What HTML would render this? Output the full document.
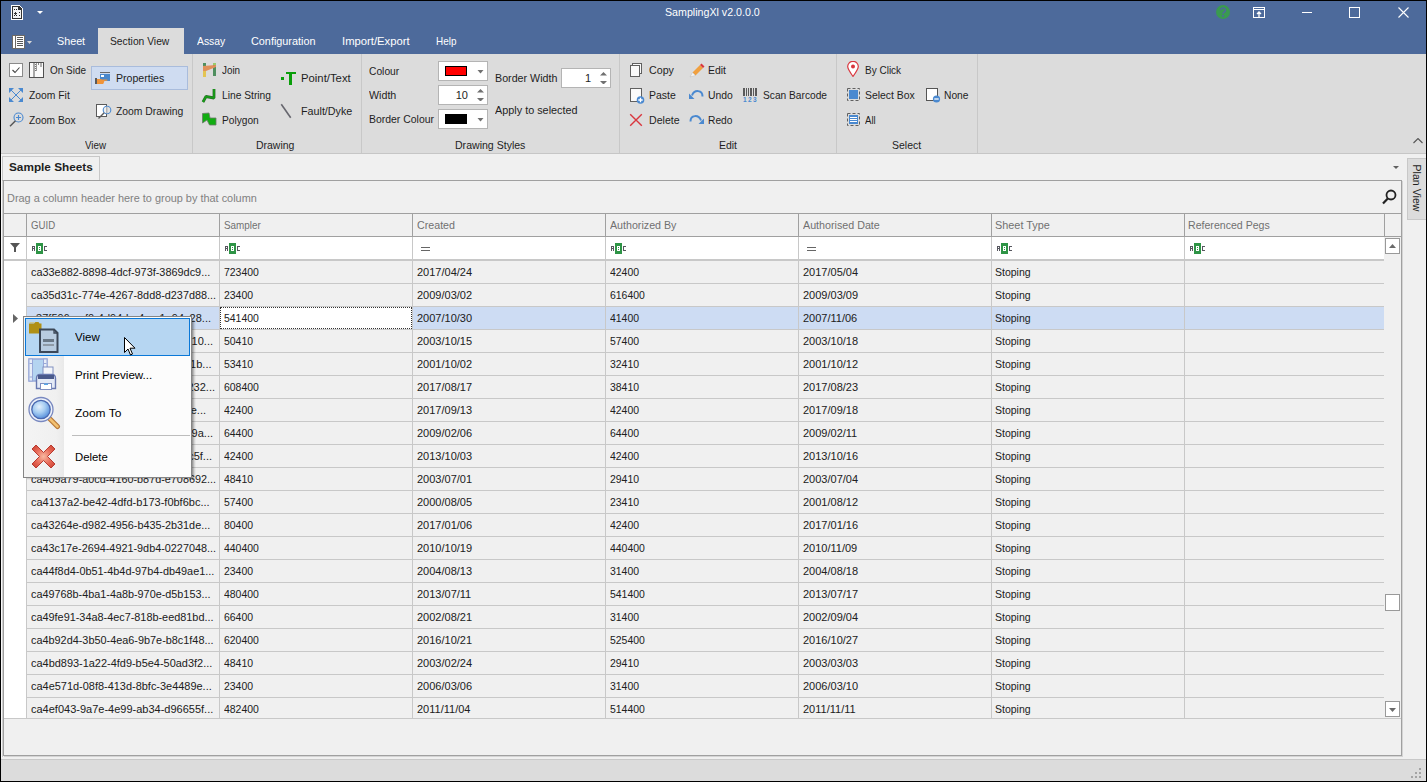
<!DOCTYPE html>
<html><head><meta charset="utf-8"><style>
html,body{margin:0;padding:0;width:1427px;height:782px;overflow:hidden;background:#f0f0f0}
.r{position:absolute;display:block}
.t{position:absolute;font-family:"Liberation Sans",sans-serif;font-size:11px;line-height:13px;color:#1e1e1e;white-space:nowrap}
.w{color:#fff}
.b{font-weight:bold;color:#1e1e1e}
.g{color:#808080}
.h{color:#707070}
.d{color:#202020}
.m{color:#000}
</style></head><body>
<div class="r" style="left:0px;top:0px;width:1427px;height:54px;background:#4d6a9b"></div><div class="t w" style="left:665px;top:6px;transform:scaleX(0.9689);transform-origin:0 0;">SamplingXl v2.0.0.0</div><svg class="r" style="left:11px;top:5px" width="13" height="15" viewBox="0 0 13 15" shape-rendering="crispEdges"><path d="M0 0h8l4 4v11H0z" fill="#fff"/><path d="M1 1h7l3 3v10H1z" fill="#333"/><path d="M2 2h5v3h3v8H2z" fill="#f4f4f4"/><path d="M8 2l2 2H8z" fill="#333"/><rect x="3" y="4" width="1" height="1" fill="#222"/><rect x="5" y="4" width="1" height="1" fill="#222"/><rect x="8" y="7" width="1" height="1" fill="#222"/><rect x="8" y="10" width="1" height="1" fill="#222"/><rect x="3" y="10" width="1" height="1" fill="#222"/><rect x="5" y="10" width="1" height="1" fill="#222"/><path d="M3 8h3v1H3zM4 7h1v3H4z" fill="#333"/></svg><svg class="r" style="left:37px;top:11px" width="6" height="3" viewBox="0 0 6 3"><path d="M0 0h6L3 3z" fill="#fff"/></svg><svg class="r" style="left:1216px;top:5px" width="14" height="14" viewBox="0 0 14 14"><circle cx="7" cy="7" r="7" fill="#3a9a50"/><path d="M4.7 5.2a2.3 2.2 0 1 1 3.3 2c-0.7 0.4-1 0.7-1 1.5" fill="none" stroke="#4d6a9b" stroke-width="1.6"/><rect x="6.1" y="9.9" width="1.8" height="1.8" fill="#4d6a9b"/></svg><svg class="r" style="left:1253px;top:7px" width="12" height="11" viewBox="0 0 12 11"><rect x="0.5" y="0.5" width="11" height="10" fill="none" stroke="#fff"/><path d="M0.5 2.5h11" stroke="#fff"/><path d="M6 10V5.5M4 7l2-2 2 2" fill="none" stroke="#fff" stroke-width="1.3"/></svg><div class="r" style="left:1302px;top:12px;width:10px;height:1px;background:#fff"></div><div class="r" style="left:1349px;top:7px;width:11px;height:11px;border:1px solid #fff;box-sizing:border-box"></div><svg class="r" style="left:1398px;top:7px" width="11" height="11" viewBox="0 0 11 11"><path d="M0.5 0.5l10 10M10.5 0.5l-10 10" stroke="#fff" stroke-width="1.1"/></svg><svg class="r" style="left:12px;top:35px" width="13" height="14" viewBox="0 0 13 14" shape-rendering="crispEdges"><rect x="0" y="0" width="13" height="14" fill="#6e6a66"/><rect x="1" y="1" width="2" height="12" fill="#fff"/><rect x="4" y="1" width="8" height="12" fill="#fff"/><path d="M5 2h6v1H5zM5 4h6v1H5zM5 6h6v1H5zM5 8h6v1H5zM5 10h6v1H5z" fill="#5a5a5a"/></svg><svg class="r" style="left:27px;top:41px" width="5" height="3" viewBox="0 0 5 3"><path d="M0 0h5L2.5 3z" fill="#d8d8d8"/></svg><div class="t w" style="left:57px;top:35px;transform:scaleX(0.9774);transform-origin:0 0;">Sheet</div><div class="r" style="left:98px;top:28px;width:86px;height:26px;background:#dcdcdc"></div><div class="t " style="left:110px;top:35px;transform:scaleX(0.9355);transform-origin:0 0;">Section View</div><div class="t w" style="left:197px;top:35px;transform:scaleX(0.9410);transform-origin:0 0;">Assay</div><div class="t w" style="left:251px;top:35px;transform:scaleX(0.9857);transform-origin:0 0;">Configuration</div><div class="t w" style="left:342px;top:35px;transform:scaleX(1.0253);transform-origin:0 0;">Import/Export</div><div class="t w" style="left:436px;top:35px;transform:scaleX(0.9017);transform-origin:0 0;">Help</div><div class="r" style="left:0px;top:54px;width:1427px;height:99px;background:#dcdcdc"></div><div class="r" style="left:0px;top:153px;width:1427px;height:1px;background:#c6c6c6"></div><div class="r" style="left:192px;top:54px;width:1px;height:99px;background:#c8c8c8"></div><div class="r" style="left:361px;top:54px;width:1px;height:99px;background:#c8c8c8"></div><div class="r" style="left:619px;top:54px;width:1px;height:99px;background:#c8c8c8"></div><div class="r" style="left:836px;top:54px;width:1px;height:99px;background:#c8c8c8"></div><div class="r" style="left:977px;top:54px;width:1px;height:99px;background:#c8c8c8"></div><div class="t " style="left:85px;top:139px;transform:scaleX(0.8919);transform-origin:0 0;">View</div><div class="t " style="left:256px;top:139px;transform:scaleX(0.9515);transform-origin:0 0;">Drawing</div><div class="t " style="left:455px;top:139px;transform:scaleX(0.9597);transform-origin:0 0;">Drawing Styles</div><div class="t " style="left:719px;top:139px;transform:scaleX(0.9489);transform-origin:0 0;">Edit</div><div class="t " style="left:892px;top:139px;transform:scaleX(0.9517);transform-origin:0 0;">Select</div><svg class="r" style="left:1413px;top:138px" width="10" height="6" viewBox="0 0 10 6"><path d="M0.5 5l4.5-4.5 4.5 4.5" fill="none" stroke="#555" stroke-width="1.1"/></svg><div class="r" style="left:9px;top:63px;width:14px;height:14px;background:#fff;border:1px solid #8a8a8a;box-sizing:border-box"></div><svg class="r" style="left:9px;top:63px" width="14" height="14" viewBox="0 0 14 14"><path d="M3.5 7l2.5 2.5 4.5-5" fill="none" stroke="#444" stroke-width="1.1"/></svg><svg class="r" style="left:29px;top:62px" width="16" height="16" viewBox="0 0 16 16" shape-rendering="crispEdges"><rect x="0.5" y="0.5" width="14" height="15" fill="#fafafa" stroke="#505050"/><rect x="4" y="1" width="2" height="14" fill="#a8a8a8"/><path d="M6 2h1v1H6zM6 4h1v1H6zM6 6h1v1H6zM6 8h1v1H6z" fill="#777"/><rect x="7" y="1" width="1" height="8" fill="#9a9a9a"/><rect x="11" y="1" width="2" height="4" fill="#b0b0b0"/><rect x="9" y="1" width="1" height="2" fill="#888"/></svg><div class="t " style="left:50px;top:64px;transform:scaleX(0.9057);transform-origin:0 0;">On Side</div><div class="r" style="left:91px;top:66px;width:97px;height:24px;background:#cfdcf1;border:1px solid #a9bcdc;box-sizing:border-box"></div><svg class="r" style="left:95px;top:72px" width="16" height="13" viewBox="0 0 16 13"><rect x="5" y="0" width="10" height="1" fill="#6a6a6a"/><rect x="5" y="2" width="10" height="7" fill="#4a88cc"/><rect x="6" y="3" width="3" height="2" fill="#fff"/><rect x="0" y="6" width="2" height="6" fill="#5a5a5a"/><path d="M2 7h3.5c0.8 0 1.2 0.5 2 0.5H12c0.6 0 0.6 1.2 0 1.2H9.5l-1 2.8c-0.3 0.5-0.7 0.5-1.2 0.5H2z" fill="#f0943a"/></svg><div class="t " style="left:116px;top:72px;transform:scaleX(0.9613);transform-origin:0 0;">Properties</div><svg class="r" style="left:9px;top:88px" width="14" height="14" viewBox="0 0 14 14"><path d="M0 0h5L0 5zM14 0v5L9 0zM0 14V9l5 5zM14 14H9l5-5z" fill="#4a89d0"/><path d="M1.5 1.5l11 11M12.5 1.5l-11 11" stroke="#4a89d0" stroke-width="1"/></svg><div class="t " style="left:29px;top:89px;transform:scaleX(0.9400);transform-origin:0 0;">Zoom Fit</div><svg class="r" style="left:9px;top:112px" width="15" height="16" viewBox="0 0 15 16"><circle cx="9.5" cy="5.5" r="4.5" fill="none" stroke="#4a89d0" stroke-width="1.1"/><path d="M9.5 3v5M7 5.5h5" stroke="#4a89d0" stroke-width="1.1"/><path d="M6.5 8.8L1 14.3" stroke="#555" stroke-width="1.4"/></svg><div class="t " style="left:29px;top:114px;transform:scaleX(0.9274);transform-origin:0 0;">Zoom Box</div><svg class="r" style="left:96px;top:104px" width="16" height="16" viewBox="0 0 16 16"><rect x="0.5" y="0.5" width="10" height="12" fill="#fff" stroke="#5a5a5a"/><circle cx="11" cy="6" r="3.8" fill="#e4e4e4" fill-opacity="0.6" stroke="#4a89d0" stroke-width="1.1"/><path d="M11 2.5v7" stroke="#b8b8b8"/><path d="M8.2 8.8L2.5 14.5" stroke="#5a5a5a" stroke-width="1.3"/></svg><div class="t " style="left:116px;top:105px;transform:scaleX(0.9422);transform-origin:0 0;">Zoom Drawing</div><svg class="r" style="left:202px;top:62px" width="15" height="16" viewBox="0 0 15 16"><rect x="1" y="1" width="3" height="14" fill="#4f8f5f"/><rect x="1" y="9" width="3" height="6" fill="#e3c452"/><rect x="11" y="1" width="3" height="13" fill="#4f8f5f"/><rect x="11" y="1" width="3" height="2" fill="#9acb6a"/><path d="M1 4L14 3V5L4 9H1z" fill="#e0905a"/></svg><div class="t " style="left:222px;top:64px;transform:scaleX(0.8966);transform-origin:0 0;">Join</div><svg class="r" style="left:201px;top:87px" width="16" height="17" viewBox="0 0 16 17"><path d="M2 15L5 9.5 13 11V2" fill="none" stroke="#2a6a2a" stroke-width="2.8" stroke-linejoin="bevel"/><path d="M2 15L5 9.5 13 11V2" fill="none" stroke="#15a015" stroke-width="1.6" stroke-linejoin="bevel"/></svg><div class="t " style="left:222px;top:89px;transform:scaleX(0.9317);transform-origin:0 0;">Line String</div><svg class="r" style="left:201px;top:112px" width="16" height="14" viewBox="0 0 16 14"><path d="M1.5 1.5L8 1 9 6H15V13H8.5L6 8 1.5 11z" fill="#11ad11" stroke="#6a7a6a" stroke-width="0.8"/></svg><div class="t " style="left:222px;top:114px;transform:scaleX(0.9254);transform-origin:0 0;">Polygon</div><svg class="r" style="left:281px;top:72px" width="15" height="14" viewBox="0 0 15 14" shape-rendering="crispEdges"><rect x="0" y="5" width="3" height="3" fill="#0a9e0a"/><rect x="5" y="0" width="10" height="2" fill="#0a9e0a"/><rect x="8" y="2" width="3" height="11" fill="#0a9e0a"/></svg><div class="t " style="left:301px;top:72px;transform:scaleX(1.0287);transform-origin:0 0;">Point/Text</div><svg class="r" style="left:280px;top:103px" width="13" height="17" viewBox="0 0 13 17"><path d="M1.3 1.3l9.4 13.4" stroke="#66666e" stroke-width="1.6"/></svg><div class="t " style="left:301px;top:105px;transform:scaleX(0.9757);transform-origin:0 0;">Fault/Dyke</div><div class="t " style="left:369px;top:65px;transform:scaleX(0.9319);transform-origin:0 0;">Colour</div><div class="t " style="left:369px;top:89px;transform:scaleX(0.9707);transform-origin:0 0;">Width</div><div class="t " style="left:369px;top:113px;transform:scaleX(0.9491);transform-origin:0 0;">Border Colour</div><div class="r" style="left:438px;top:61px;width:50px;height:20px;background:#fff;border:1px solid #b4b4b4;box-sizing:border-box"></div><div class="r" style="left:445px;top:66px;width:22px;height:10px;background:#f00;border:1px solid #000;box-sizing:border-box"></div><svg class="r" style="left:477px;top:70px" width="7" height="4" viewBox="0 0 7 4"><path d="M0.5 0h6l-3 3.5z" fill="#707070"/></svg><div class="r" style="left:438px;top:85px;width:50px;height:20px;background:#fff;border:1px solid #b4b4b4;box-sizing:border-box"></div><div class="t" style="left:438px;top:89px;width:30px;text-align:right">10</div><svg class="r" style="left:477px;top:89px" width="7" height="12" viewBox="0 0 7 12"><path d="M0 3.5h7L3.5 0zM0 9h7L3.5 12.5z" fill="#707070"/></svg><div class="r" style="left:438px;top:109px;width:50px;height:20px;background:#fff;border:1px solid #b4b4b4;box-sizing:border-box"></div><div class="r" style="left:445px;top:114px;width:22px;height:10px;background:#000;border:1px solid #000;box-sizing:border-box"></div><svg class="r" style="left:477px;top:118px" width="7" height="4" viewBox="0 0 7 4"><path d="M0.5 0h6l-3 3.5z" fill="#707070"/></svg><div class="t " style="left:495px;top:72px;transform:scaleX(0.9719);transform-origin:0 0;">Border Width</div><div class="r" style="left:561px;top:68px;width:50px;height:20px;background:#fff;border:1px solid #b4b4b4;box-sizing:border-box"></div><div class="t" style="left:561px;top:72px;width:30px;text-align:right">1</div><svg class="r" style="left:600px;top:72px" width="7" height="12" viewBox="0 0 7 12"><path d="M0 3.5h7L3.5 0zM0 9h7L3.5 12.5z" fill="#707070"/></svg><div class="t " style="left:495px;top:104px;transform:scaleX(0.9859);transform-origin:0 0;">Apply to selected</div><svg class="r" style="left:629px;top:62px" width="15" height="16" viewBox="0 0 15 16" shape-rendering="crispEdges"><rect x="3.5" y="1.5" width="9" height="10" fill="#fafafa" stroke="#606060"/><rect x="1.5" y="3.5" width="9" height="11" fill="#fafafa" stroke="#606060"/></svg><div class="t " style="left:649px;top:64px;transform:scaleX(0.9693);transform-origin:0 0;">Copy</div><svg class="r" style="left:629px;top:87px" width="16" height="17" viewBox="0 0 16 17"><rect x="1.5" y="1.5" width="11" height="13" fill="#fafafa" stroke="#606060"/><circle cx="11.5" cy="13" r="3.8" fill="#4a89d0"/><path d="M11.5 10.8v4.4M9.3 13h4.4" stroke="#fff" stroke-width="1.3"/></svg><div class="t " style="left:649px;top:89px;transform:scaleX(0.9524);transform-origin:0 0;">Paste</div><svg class="r" style="left:629px;top:113px" width="14" height="14" viewBox="0 0 14 14"><path d="M1.2 1.2l11.6 11.6M12.8 1.2L1.2 12.8" stroke="#d9363e" stroke-width="1.4"/></svg><div class="t " style="left:649px;top:114px;transform:scaleX(0.9624);transform-origin:0 0;">Delete</div><svg class="r" style="left:689px;top:62px" width="16" height="16" viewBox="0 0 16 16"><path d="M3.5 10.5L11 3l3 3-7.5 7.5z" fill="#f0a040"/><path d="M11 3l1.5-1.5 3 3L14 6z" fill="#d9363e"/><path d="M3.5 10.5l3 3L1 15z" fill="#f4f4f4" stroke="#bbb" stroke-width="0.5"/></svg><div class="t " style="left:708px;top:64px;transform:scaleX(0.9489);transform-origin:0 0;">Edit</div><svg class="r" style="left:689px;top:89px" width="15" height="11" viewBox="0 0 15 11"><path d="M13.5 7.5C13.5 1 5.5 0 3 6.5" fill="none" stroke="#4a89d0" stroke-width="2"/><path d="M0 4.5V10h5.5z" fill="#4a89d0"/></svg><div class="t " style="left:708px;top:89px;transform:scaleX(0.9431);transform-origin:0 0;">Undo</div><svg class="r" style="left:689px;top:114px" width="15" height="11" viewBox="0 0 15 11"><path d="M1.5 7.5C1.5 1 9.5 0 12 6.5" fill="none" stroke="#4a89d0" stroke-width="2"/><path d="M15 4.5V10H9.5z" fill="#4a89d0"/></svg><div class="t " style="left:708px;top:114px;transform:scaleX(0.9317);transform-origin:0 0;">Redo</div><svg class="r" style="left:743px;top:88px" width="15" height="15" viewBox="0 0 15 15" shape-rendering="crispEdges"><path d="M0 0h2v8H0zM3 0h1v8H3zM5 0h1v8H5zM7 0h2v8H7zM10 0h1v8h-1zM12 0h2v8h-2z" fill="#5a5a5a"/><text x="0" y="14" font-size="6.5" font-weight="bold" font-family="Liberation Sans" fill="#4a89d0" shape-rendering="auto">1</text><text x="5" y="14" font-size="6.5" font-weight="bold" font-family="Liberation Sans" fill="#4a89d0">2</text><text x="10" y="14" font-size="6.5" font-weight="bold" font-family="Liberation Sans" fill="#4a89d0">3</text></svg><div class="t " style="left:763px;top:89px;transform:scaleX(0.9261);transform-origin:0 0;">Scan Barcode</div><svg class="r" style="left:847px;top:61px" width="12" height="16" viewBox="0 0 12 16"><path d="M6 15.5C2 10 0.7 7.5 0.7 5.6a5.3 5.3 0 0 1 10.6 0C11.3 7.5 10 10 6 15.5z" fill="#fff" stroke="#d9363e" stroke-width="1.2"/><circle cx="6" cy="5.6" r="2" fill="#d9363e"/></svg><div class="t " style="left:865px;top:64px;transform:scaleX(0.9085);transform-origin:0 0;">By Click</div><svg class="r" style="left:847px;top:88px" width="14" height="14" viewBox="0 0 14 14"><rect x="0.5" y="0.5" width="12" height="12" fill="none" stroke="#606060" stroke-dasharray="3 2" stroke-dashoffset="0"/><rect x="2" y="2" width="9" height="9" fill="#4a89d0"/></svg><div class="t " style="left:865px;top:89px;transform:scaleX(0.9469);transform-origin:0 0;">Select Box</div><svg class="r" style="left:926px;top:88px" width="15" height="15" viewBox="0 0 15 15"><rect x="0.5" y="0.5" width="11" height="12" fill="#fff" stroke="#555"/><circle cx="10.5" cy="11" r="3.6" fill="#4a89d0"/><path d="M8.3 11h4.4" stroke="#fff" stroke-width="1.3"/></svg><div class="t " style="left:944px;top:89px;transform:scaleX(0.9317);transform-origin:0 0;">None</div><svg class="r" style="left:847px;top:113px" width="14" height="14" viewBox="0 0 14 14"><rect x="0.5" y="0.5" width="12" height="12" fill="none" stroke="#606060" stroke-dasharray="3 2"/><rect x="2" y="2" width="9" height="9" fill="#4a89d0"/><path d="M3 4.5h7M3 6.5h7M3 8.5h7" stroke="#fff"/></svg><div class="t " style="left:865px;top:114px;transform:scaleX(0.8746);transform-origin:0 0;">All</div><div class="r" style="left:0px;top:154px;width:1427px;height:604px;background:#f0f0f0"></div><div class="r" style="left:2px;top:156px;width:98px;height:25px;background:#f0f0f0;border:1px solid #c8c8c8;border-bottom:none;box-sizing:border-box"></div><div class="t b" style="left:9px;top:161px;transform:scaleX(1.0707);transform-origin:0 0;">Sample Sheets</div><div class="r" style="left:2px;top:180px;width:1400px;height:1px;background:#b4b4b4"></div><svg class="r" style="left:1393px;top:166px" width="6" height="3" viewBox="0 0 6 3"><path d="M0 0h6L3 3z" fill="#606060"/></svg><div class="r" style="left:1407px;top:158px;width:19px;height:62px;background:#dcdcdc;border:1px solid #c8c8c8;border-right:none;box-sizing:border-box"></div><div class="t" style="left:1389px;top:182px;width:56px;text-align:center;transform:translate(-1px,-0.5px) rotate(90deg) scaleX(0.965)">Plan View</div><div class="r" style="left:3px;top:180px;width:1399px;height:576px;border:1px solid #a0a0a0;box-sizing:border-box;background:#f0f0f0"></div><div class="t g" style="left:7px;top:192px;transform:scaleX(0.9915);transform-origin:0 0;">Drag a column header here to group by that column</div><svg class="r" style="left:1382px;top:189px" width="15" height="16" viewBox="0 0 15 16"><circle cx="9" cy="6" r="4.5" fill="none" stroke="#222" stroke-width="1.8"/><path d="M5.8 9.5L1 14.5" stroke="#222" stroke-width="2.2"/></svg><div class="r" style="left:4px;top:213px;width:1397px;height:1px;background:#a0a0a0"></div><div class="r" style="left:4px;top:236px;width:1397px;height:1px;background:#a0a0a0"></div><div class="r" style="left:26px;top:214px;width:1px;height:22px;background:#a0a0a0"></div><div class="r" style="left:219px;top:214px;width:1px;height:22px;background:#a0a0a0"></div><div class="r" style="left:412px;top:214px;width:1px;height:22px;background:#a0a0a0"></div><div class="r" style="left:605px;top:214px;width:1px;height:22px;background:#a0a0a0"></div><div class="r" style="left:798px;top:214px;width:1px;height:22px;background:#a0a0a0"></div><div class="r" style="left:991px;top:214px;width:1px;height:22px;background:#a0a0a0"></div><div class="r" style="left:1184px;top:214px;width:1px;height:22px;background:#a0a0a0"></div><div class="r" style="left:1384px;top:214px;width:1px;height:22px;background:#a0a0a0"></div><div class="t h" style="left:31px;top:219px;transform:scaleX(0.8764);transform-origin:0 0;">GUID</div><div class="t h" style="left:224px;top:219px;transform:scaleX(0.8982);transform-origin:0 0;">Sampler</div><div class="t h" style="left:417px;top:219px;transform:scaleX(0.9709);transform-origin:0 0;">Created</div><div class="t h" style="left:610px;top:219px;transform:scaleX(0.9696);transform-origin:0 0;">Authorized By</div><div class="t h" style="left:803px;top:219px;transform:scaleX(0.9735);transform-origin:0 0;">Authorised Date</div><div class="t h" style="left:995px;top:219px;transform:scaleX(0.9882);transform-origin:0 0;">Sheet Type</div><div class="t h" style="left:1188px;top:219px;transform:scaleX(0.9624);transform-origin:0 0;">Referenced Pegs</div><div class="r" style="left:4px;top:237px;width:1380px;height:22px;background:#fff"></div><div class="r" style="left:4px;top:259px;width:1380px;height:2px;background:#c8c8c8"></div><div class="r" style="left:26px;top:237px;width:1px;height:22px;background:#c8c8c8"></div><div class="r" style="left:219px;top:237px;width:1px;height:22px;background:#c8c8c8"></div><div class="r" style="left:412px;top:237px;width:1px;height:22px;background:#c8c8c8"></div><div class="r" style="left:605px;top:237px;width:1px;height:22px;background:#c8c8c8"></div><div class="r" style="left:798px;top:237px;width:1px;height:22px;background:#c8c8c8"></div><div class="r" style="left:991px;top:237px;width:1px;height:22px;background:#c8c8c8"></div><div class="r" style="left:1184px;top:237px;width:1px;height:22px;background:#c8c8c8"></div><svg class="r" style="left:10px;top:243px" width="10" height="9" viewBox="0 0 10 9"><path d="M0 0h10L6 4.5V9H4V4.5z" fill="#555"/></svg><svg class="r" style="left:32px;top:243px" width="16" height="11" viewBox="0 0 16 11" shape-rendering="crispEdges"><path d="M0 3h3v1H0zM0 4h1v4H0zM2 4h1v4H2zM0 5h3v1H0z" fill="#56565e"/><rect x="4" y="0" width="7" height="11" fill="#2e9446"/><rect x="6" y="3" width="3" height="5" fill="#fff"/><rect x="7" y="4" width="1" height="1" fill="#2e9446"/><rect x="7" y="6" width="1" height="1" fill="#2e9446"/><path d="M12 3h3v1h-3zM12 4h1v3h-1zM12 7h3v1h-3z" fill="#56565e"/></svg><svg class="r" style="left:225px;top:243px" width="16" height="11" viewBox="0 0 16 11" shape-rendering="crispEdges"><path d="M0 3h3v1H0zM0 4h1v4H0zM2 4h1v4H2zM0 5h3v1H0z" fill="#56565e"/><rect x="4" y="0" width="7" height="11" fill="#2e9446"/><rect x="6" y="3" width="3" height="5" fill="#fff"/><rect x="7" y="4" width="1" height="1" fill="#2e9446"/><rect x="7" y="6" width="1" height="1" fill="#2e9446"/><path d="M12 3h3v1h-3zM12 4h1v3h-1zM12 7h3v1h-3z" fill="#56565e"/></svg><div class="r" style="left:421px;top:247px;width:9px;height:1px;background:#666"></div><div class="r" style="left:421px;top:250px;width:9px;height:1px;background:#666"></div><svg class="r" style="left:611px;top:243px" width="16" height="11" viewBox="0 0 16 11" shape-rendering="crispEdges"><path d="M0 3h3v1H0zM0 4h1v4H0zM2 4h1v4H2zM0 5h3v1H0z" fill="#56565e"/><rect x="4" y="0" width="7" height="11" fill="#2e9446"/><rect x="6" y="3" width="3" height="5" fill="#fff"/><rect x="7" y="4" width="1" height="1" fill="#2e9446"/><rect x="7" y="6" width="1" height="1" fill="#2e9446"/><path d="M12 3h3v1h-3zM12 4h1v3h-1zM12 7h3v1h-3z" fill="#56565e"/></svg><div class="r" style="left:807px;top:247px;width:9px;height:1px;background:#666"></div><div class="r" style="left:807px;top:250px;width:9px;height:1px;background:#666"></div><svg class="r" style="left:997px;top:243px" width="16" height="11" viewBox="0 0 16 11" shape-rendering="crispEdges"><path d="M0 3h3v1H0zM0 4h1v4H0zM2 4h1v4H2zM0 5h3v1H0z" fill="#56565e"/><rect x="4" y="0" width="7" height="11" fill="#2e9446"/><rect x="6" y="3" width="3" height="5" fill="#fff"/><rect x="7" y="4" width="1" height="1" fill="#2e9446"/><rect x="7" y="6" width="1" height="1" fill="#2e9446"/><path d="M12 3h3v1h-3zM12 4h1v3h-1zM12 7h3v1h-3z" fill="#56565e"/></svg><svg class="r" style="left:1190px;top:243px" width="16" height="11" viewBox="0 0 16 11" shape-rendering="crispEdges"><path d="M0 3h3v1H0zM0 4h1v4H0zM2 4h1v4H2zM0 5h3v1H0z" fill="#56565e"/><rect x="4" y="0" width="7" height="11" fill="#2e9446"/><rect x="6" y="3" width="3" height="5" fill="#fff"/><rect x="7" y="4" width="1" height="1" fill="#2e9446"/><rect x="7" y="6" width="1" height="1" fill="#2e9446"/><path d="M12 3h3v1h-3zM12 4h1v3h-1zM12 7h3v1h-3z" fill="#56565e"/></svg><div class="r" style="left:4px;top:261px;width:22px;height:457px;background:#fff"></div><div class="r" style="left:26px;top:261px;width:1px;height:457px;background:#c8c8c8"></div><div class="r" style="left:4px;top:718px;width:1397px;height:1px;background:#c8c8c8"></div><div class="r" style="left:27px;top:261px;width:1357px;height:22px;background:#f0f0f0"></div><div class="r" style="left:27px;top:283px;width:1357px;height:1px;background:#c8c8c8"></div><div class="t d" style="left:31px;top:266px;transform:scaleX(0.9901);transform-origin:0 0;">ca33e882-8898-4dcf-973f-3869dc9...</div><div class="t d" style="left:224px;top:266px;transform:scaleX(0.9500);transform-origin:0 0;">723400</div><div class="t d" style="left:417px;top:266px;">2017/04/24</div><div class="t d" style="left:610px;top:266px;transform:scaleX(0.9500);transform-origin:0 0;">42400</div><div class="t d" style="left:803px;top:266px;">2017/05/04</div><div class="t d" style="left:995px;top:266px;transform:scaleX(0.9541);transform-origin:0 0;">Stoping</div><div class="r" style="left:219px;top:261px;width:1px;height:22px;background:#c8c8c8"></div><div class="r" style="left:412px;top:261px;width:1px;height:22px;background:#c8c8c8"></div><div class="r" style="left:605px;top:261px;width:1px;height:22px;background:#c8c8c8"></div><div class="r" style="left:798px;top:261px;width:1px;height:22px;background:#c8c8c8"></div><div class="r" style="left:991px;top:261px;width:1px;height:22px;background:#c8c8c8"></div><div class="r" style="left:1184px;top:261px;width:1px;height:22px;background:#c8c8c8"></div><div class="r" style="left:27px;top:284px;width:1357px;height:22px;background:#f0f0f0"></div><div class="r" style="left:27px;top:306px;width:1357px;height:1px;background:#c8c8c8"></div><div class="t d" style="left:31px;top:289px;transform:scaleX(0.9856);transform-origin:0 0;">ca35d31c-774e-4267-8dd8-d237d88...</div><div class="t d" style="left:224px;top:289px;transform:scaleX(0.9500);transform-origin:0 0;">23400</div><div class="t d" style="left:417px;top:289px;">2009/03/02</div><div class="t d" style="left:610px;top:289px;transform:scaleX(0.9500);transform-origin:0 0;">616400</div><div class="t d" style="left:803px;top:289px;">2009/03/09</div><div class="t d" style="left:995px;top:289px;transform:scaleX(0.9541);transform-origin:0 0;">Stoping</div><div class="r" style="left:219px;top:284px;width:1px;height:22px;background:#c8c8c8"></div><div class="r" style="left:412px;top:284px;width:1px;height:22px;background:#c8c8c8"></div><div class="r" style="left:605px;top:284px;width:1px;height:22px;background:#c8c8c8"></div><div class="r" style="left:798px;top:284px;width:1px;height:22px;background:#c8c8c8"></div><div class="r" style="left:991px;top:284px;width:1px;height:22px;background:#c8c8c8"></div><div class="r" style="left:1184px;top:284px;width:1px;height:22px;background:#c8c8c8"></div><div class="r" style="left:27px;top:307px;width:1357px;height:22px;background:#cddcf3"></div><div class="r" style="left:27px;top:329px;width:1357px;height:1px;background:#c8c8c8"></div><div class="t d" style="left:27px;top:312px;width:184px;height:13px;overflow:hidden"><span style="position:absolute;right:0;top:0">ca37f596-ecf0-4d94-ba4e-c1e94c28...</span></div><div class="t d" style="left:224px;top:312px;transform:scaleX(0.9500);transform-origin:0 0;">541400</div><div class="t d" style="left:417px;top:312px;">2007/10/30</div><div class="t d" style="left:610px;top:312px;transform:scaleX(0.9500);transform-origin:0 0;">41400</div><div class="t d" style="left:803px;top:312px;">2007/11/06</div><div class="t d" style="left:995px;top:312px;transform:scaleX(0.9541);transform-origin:0 0;">Stoping</div><div class="r" style="left:219px;top:307px;width:1px;height:22px;background:#c8c8c8"></div><div class="r" style="left:412px;top:307px;width:1px;height:22px;background:#c8c8c8"></div><div class="r" style="left:605px;top:307px;width:1px;height:22px;background:#c8c8c8"></div><div class="r" style="left:798px;top:307px;width:1px;height:22px;background:#c8c8c8"></div><div class="r" style="left:991px;top:307px;width:1px;height:22px;background:#c8c8c8"></div><div class="r" style="left:1184px;top:307px;width:1px;height:22px;background:#c8c8c8"></div><div class="r" style="left:27px;top:330px;width:1357px;height:22px;background:#f0f0f0"></div><div class="r" style="left:27px;top:352px;width:1357px;height:1px;background:#c8c8c8"></div><div class="t d" style="left:27px;top:335px;width:186px;height:13px;overflow:hidden"><span style="position:absolute;right:0;top:0">ca3a1c2e-7d5b-4f3a-9e21-8b2c4ce10...</span></div><div class="t d" style="left:224px;top:335px;transform:scaleX(0.9500);transform-origin:0 0;">50410</div><div class="t d" style="left:417px;top:335px;">2003/10/15</div><div class="t d" style="left:610px;top:335px;transform:scaleX(0.9500);transform-origin:0 0;">57400</div><div class="t d" style="left:803px;top:335px;">2003/10/18</div><div class="t d" style="left:995px;top:335px;transform:scaleX(0.9541);transform-origin:0 0;">Stoping</div><div class="r" style="left:219px;top:330px;width:1px;height:22px;background:#c8c8c8"></div><div class="r" style="left:412px;top:330px;width:1px;height:22px;background:#c8c8c8"></div><div class="r" style="left:605px;top:330px;width:1px;height:22px;background:#c8c8c8"></div><div class="r" style="left:798px;top:330px;width:1px;height:22px;background:#c8c8c8"></div><div class="r" style="left:991px;top:330px;width:1px;height:22px;background:#c8c8c8"></div><div class="r" style="left:1184px;top:330px;width:1px;height:22px;background:#c8c8c8"></div><div class="r" style="left:27px;top:353px;width:1357px;height:22px;background:#f0f0f0"></div><div class="r" style="left:27px;top:375px;width:1357px;height:1px;background:#c8c8c8"></div><div class="t d" style="left:27px;top:358px;width:184.5px;height:13px;overflow:hidden"><span style="position:absolute;right:0;top:0">ca3c55d1-2b7e-4a09-8c3f-e7a9ec1b...</span></div><div class="t d" style="left:224px;top:358px;transform:scaleX(0.9500);transform-origin:0 0;">53410</div><div class="t d" style="left:417px;top:358px;">2001/10/02</div><div class="t d" style="left:610px;top:358px;transform:scaleX(0.9500);transform-origin:0 0;">32410</div><div class="t d" style="left:803px;top:358px;">2001/10/12</div><div class="t d" style="left:995px;top:358px;transform:scaleX(0.9541);transform-origin:0 0;">Stoping</div><div class="r" style="left:219px;top:353px;width:1px;height:22px;background:#c8c8c8"></div><div class="r" style="left:412px;top:353px;width:1px;height:22px;background:#c8c8c8"></div><div class="r" style="left:605px;top:353px;width:1px;height:22px;background:#c8c8c8"></div><div class="r" style="left:798px;top:353px;width:1px;height:22px;background:#c8c8c8"></div><div class="r" style="left:991px;top:353px;width:1px;height:22px;background:#c8c8c8"></div><div class="r" style="left:1184px;top:353px;width:1px;height:22px;background:#c8c8c8"></div><div class="r" style="left:27px;top:376px;width:1357px;height:22px;background:#f0f0f0"></div><div class="r" style="left:27px;top:398px;width:1357px;height:1px;background:#c8c8c8"></div><div class="t d" style="left:27px;top:381px;width:188px;height:13px;overflow:hidden"><span style="position:absolute;right:0;top:0">ca3d0f4b-91ce-4b62-a7d8-5f1e0232...</span></div><div class="t d" style="left:224px;top:381px;transform:scaleX(0.9500);transform-origin:0 0;">608400</div><div class="t d" style="left:417px;top:381px;">2017/08/17</div><div class="t d" style="left:610px;top:381px;transform:scaleX(0.9500);transform-origin:0 0;">38410</div><div class="t d" style="left:803px;top:381px;">2017/08/23</div><div class="t d" style="left:995px;top:381px;transform:scaleX(0.9541);transform-origin:0 0;">Stoping</div><div class="r" style="left:219px;top:376px;width:1px;height:22px;background:#c8c8c8"></div><div class="r" style="left:412px;top:376px;width:1px;height:22px;background:#c8c8c8"></div><div class="r" style="left:605px;top:376px;width:1px;height:22px;background:#c8c8c8"></div><div class="r" style="left:798px;top:376px;width:1px;height:22px;background:#c8c8c8"></div><div class="r" style="left:991px;top:376px;width:1px;height:22px;background:#c8c8c8"></div><div class="r" style="left:1184px;top:376px;width:1px;height:22px;background:#c8c8c8"></div><div class="r" style="left:27px;top:399px;width:1357px;height:22px;background:#f0f0f0"></div><div class="r" style="left:27px;top:421px;width:1357px;height:1px;background:#c8c8c8"></div><div class="t d" style="left:27px;top:404px;width:179px;height:13px;overflow:hidden"><span style="position:absolute;right:0;top:0">ca3e7a90-4c1d-4e8b-b2f6-a93c7ce...</span></div><div class="t d" style="left:224px;top:404px;transform:scaleX(0.9500);transform-origin:0 0;">42400</div><div class="t d" style="left:417px;top:404px;">2017/09/13</div><div class="t d" style="left:610px;top:404px;transform:scaleX(0.9500);transform-origin:0 0;">42400</div><div class="t d" style="left:803px;top:404px;">2017/09/18</div><div class="t d" style="left:995px;top:404px;transform:scaleX(0.9541);transform-origin:0 0;">Stoping</div><div class="r" style="left:219px;top:399px;width:1px;height:22px;background:#c8c8c8"></div><div class="r" style="left:412px;top:399px;width:1px;height:22px;background:#c8c8c8"></div><div class="r" style="left:605px;top:399px;width:1px;height:22px;background:#c8c8c8"></div><div class="r" style="left:798px;top:399px;width:1px;height:22px;background:#c8c8c8"></div><div class="r" style="left:991px;top:399px;width:1px;height:22px;background:#c8c8c8"></div><div class="r" style="left:1184px;top:399px;width:1px;height:22px;background:#c8c8c8"></div><div class="r" style="left:27px;top:422px;width:1357px;height:22px;background:#f0f0f0"></div><div class="r" style="left:27px;top:444px;width:1357px;height:1px;background:#c8c8c8"></div><div class="t d" style="left:27px;top:427px;width:186px;height:13px;overflow:hidden"><span style="position:absolute;right:0;top:0">ca3f2b61-d0a4-4c7e-95b3-6e8dc9a...</span></div><div class="t d" style="left:224px;top:427px;transform:scaleX(0.9500);transform-origin:0 0;">64400</div><div class="t d" style="left:417px;top:427px;">2009/02/06</div><div class="t d" style="left:610px;top:427px;transform:scaleX(0.9500);transform-origin:0 0;">64400</div><div class="t d" style="left:803px;top:427px;">2009/02/11</div><div class="t d" style="left:995px;top:427px;transform:scaleX(0.9541);transform-origin:0 0;">Stoping</div><div class="r" style="left:219px;top:422px;width:1px;height:22px;background:#c8c8c8"></div><div class="r" style="left:412px;top:422px;width:1px;height:22px;background:#c8c8c8"></div><div class="r" style="left:605px;top:422px;width:1px;height:22px;background:#c8c8c8"></div><div class="r" style="left:798px;top:422px;width:1px;height:22px;background:#c8c8c8"></div><div class="r" style="left:991px;top:422px;width:1px;height:22px;background:#c8c8c8"></div><div class="r" style="left:1184px;top:422px;width:1px;height:22px;background:#c8c8c8"></div><div class="r" style="left:27px;top:445px;width:1357px;height:22px;background:#f0f0f0"></div><div class="r" style="left:27px;top:467px;width:1357px;height:1px;background:#c8c8c8"></div><div class="t d" style="left:27px;top:450px;width:185px;height:13px;overflow:hidden"><span style="position:absolute;right:0;top:0">ca401d8e-5a3c-4f1b-8e07-c2b6c5f...</span></div><div class="t d" style="left:224px;top:450px;transform:scaleX(0.9500);transform-origin:0 0;">42400</div><div class="t d" style="left:417px;top:450px;">2013/10/03</div><div class="t d" style="left:610px;top:450px;transform:scaleX(0.9500);transform-origin:0 0;">42400</div><div class="t d" style="left:803px;top:450px;">2013/10/16</div><div class="t d" style="left:995px;top:450px;transform:scaleX(0.9541);transform-origin:0 0;">Stoping</div><div class="r" style="left:219px;top:445px;width:1px;height:22px;background:#c8c8c8"></div><div class="r" style="left:412px;top:445px;width:1px;height:22px;background:#c8c8c8"></div><div class="r" style="left:605px;top:445px;width:1px;height:22px;background:#c8c8c8"></div><div class="r" style="left:798px;top:445px;width:1px;height:22px;background:#c8c8c8"></div><div class="r" style="left:991px;top:445px;width:1px;height:22px;background:#c8c8c8"></div><div class="r" style="left:1184px;top:445px;width:1px;height:22px;background:#c8c8c8"></div><div class="r" style="left:27px;top:468px;width:1357px;height:22px;background:#f0f0f0"></div><div class="r" style="left:27px;top:490px;width:1357px;height:1px;background:#c8c8c8"></div><div class="t d" style="left:31px;top:473px;transform:scaleX(0.9856);transform-origin:0 0;">ca409a79-a0cd-4160-b87d-e708692...</div><div class="t d" style="left:224px;top:473px;transform:scaleX(0.9500);transform-origin:0 0;">48410</div><div class="t d" style="left:417px;top:473px;">2003/07/01</div><div class="t d" style="left:610px;top:473px;transform:scaleX(0.9500);transform-origin:0 0;">29410</div><div class="t d" style="left:803px;top:473px;">2003/07/04</div><div class="t d" style="left:995px;top:473px;transform:scaleX(0.9541);transform-origin:0 0;">Stoping</div><div class="r" style="left:219px;top:468px;width:1px;height:22px;background:#c8c8c8"></div><div class="r" style="left:412px;top:468px;width:1px;height:22px;background:#c8c8c8"></div><div class="r" style="left:605px;top:468px;width:1px;height:22px;background:#c8c8c8"></div><div class="r" style="left:798px;top:468px;width:1px;height:22px;background:#c8c8c8"></div><div class="r" style="left:991px;top:468px;width:1px;height:22px;background:#c8c8c8"></div><div class="r" style="left:1184px;top:468px;width:1px;height:22px;background:#c8c8c8"></div><div class="r" style="left:27px;top:491px;width:1357px;height:22px;background:#f0f0f0"></div><div class="r" style="left:27px;top:513px;width:1357px;height:1px;background:#c8c8c8"></div><div class="t d" style="left:31px;top:496px;">ca4137a2-be42-4dfd-b173-f0bf6bc...</div><div class="t d" style="left:224px;top:496px;transform:scaleX(0.9500);transform-origin:0 0;">57400</div><div class="t d" style="left:417px;top:496px;">2000/08/05</div><div class="t d" style="left:610px;top:496px;transform:scaleX(0.9500);transform-origin:0 0;">23410</div><div class="t d" style="left:803px;top:496px;">2001/08/12</div><div class="t d" style="left:995px;top:496px;transform:scaleX(0.9541);transform-origin:0 0;">Stoping</div><div class="r" style="left:219px;top:491px;width:1px;height:22px;background:#c8c8c8"></div><div class="r" style="left:412px;top:491px;width:1px;height:22px;background:#c8c8c8"></div><div class="r" style="left:605px;top:491px;width:1px;height:22px;background:#c8c8c8"></div><div class="r" style="left:798px;top:491px;width:1px;height:22px;background:#c8c8c8"></div><div class="r" style="left:991px;top:491px;width:1px;height:22px;background:#c8c8c8"></div><div class="r" style="left:1184px;top:491px;width:1px;height:22px;background:#c8c8c8"></div><div class="r" style="left:27px;top:514px;width:1357px;height:22px;background:#f0f0f0"></div><div class="r" style="left:27px;top:536px;width:1357px;height:1px;background:#c8c8c8"></div><div class="t d" style="left:31px;top:519px;transform:scaleX(0.9830);transform-origin:0 0;">ca43264e-d982-4956-b435-2b31de...</div><div class="t d" style="left:224px;top:519px;transform:scaleX(0.9500);transform-origin:0 0;">80400</div><div class="t d" style="left:417px;top:519px;">2017/01/06</div><div class="t d" style="left:610px;top:519px;transform:scaleX(0.9500);transform-origin:0 0;">42400</div><div class="t d" style="left:803px;top:519px;">2017/01/16</div><div class="t d" style="left:995px;top:519px;transform:scaleX(0.9541);transform-origin:0 0;">Stoping</div><div class="r" style="left:219px;top:514px;width:1px;height:22px;background:#c8c8c8"></div><div class="r" style="left:412px;top:514px;width:1px;height:22px;background:#c8c8c8"></div><div class="r" style="left:605px;top:514px;width:1px;height:22px;background:#c8c8c8"></div><div class="r" style="left:798px;top:514px;width:1px;height:22px;background:#c8c8c8"></div><div class="r" style="left:991px;top:514px;width:1px;height:22px;background:#c8c8c8"></div><div class="r" style="left:1184px;top:514px;width:1px;height:22px;background:#c8c8c8"></div><div class="r" style="left:27px;top:537px;width:1357px;height:22px;background:#f0f0f0"></div><div class="r" style="left:27px;top:559px;width:1357px;height:1px;background:#c8c8c8"></div><div class="t d" style="left:31px;top:542px;transform:scaleX(0.9856);transform-origin:0 0;">ca43c17e-2694-4921-9db4-0227048...</div><div class="t d" style="left:224px;top:542px;transform:scaleX(0.9500);transform-origin:0 0;">440400</div><div class="t d" style="left:417px;top:542px;">2010/10/19</div><div class="t d" style="left:610px;top:542px;transform:scaleX(0.9500);transform-origin:0 0;">440400</div><div class="t d" style="left:803px;top:542px;">2010/11/09</div><div class="t d" style="left:995px;top:542px;transform:scaleX(0.9541);transform-origin:0 0;">Stoping</div><div class="r" style="left:219px;top:537px;width:1px;height:22px;background:#c8c8c8"></div><div class="r" style="left:412px;top:537px;width:1px;height:22px;background:#c8c8c8"></div><div class="r" style="left:605px;top:537px;width:1px;height:22px;background:#c8c8c8"></div><div class="r" style="left:798px;top:537px;width:1px;height:22px;background:#c8c8c8"></div><div class="r" style="left:991px;top:537px;width:1px;height:22px;background:#c8c8c8"></div><div class="r" style="left:1184px;top:537px;width:1px;height:22px;background:#c8c8c8"></div><div class="r" style="left:27px;top:560px;width:1357px;height:22px;background:#f0f0f0"></div><div class="r" style="left:27px;top:582px;width:1357px;height:1px;background:#c8c8c8"></div><div class="t d" style="left:31px;top:565px;transform:scaleX(0.9892);transform-origin:0 0;">ca44f8d4-0b51-4b4d-97b4-db49ae1...</div><div class="t d" style="left:224px;top:565px;transform:scaleX(0.9500);transform-origin:0 0;">23400</div><div class="t d" style="left:417px;top:565px;">2004/08/13</div><div class="t d" style="left:610px;top:565px;transform:scaleX(0.9500);transform-origin:0 0;">31400</div><div class="t d" style="left:803px;top:565px;">2004/08/18</div><div class="t d" style="left:995px;top:565px;transform:scaleX(0.9541);transform-origin:0 0;">Stoping</div><div class="r" style="left:219px;top:560px;width:1px;height:22px;background:#c8c8c8"></div><div class="r" style="left:412px;top:560px;width:1px;height:22px;background:#c8c8c8"></div><div class="r" style="left:605px;top:560px;width:1px;height:22px;background:#c8c8c8"></div><div class="r" style="left:798px;top:560px;width:1px;height:22px;background:#c8c8c8"></div><div class="r" style="left:991px;top:560px;width:1px;height:22px;background:#c8c8c8"></div><div class="r" style="left:1184px;top:560px;width:1px;height:22px;background:#c8c8c8"></div><div class="r" style="left:27px;top:583px;width:1357px;height:22px;background:#f0f0f0"></div><div class="r" style="left:27px;top:605px;width:1357px;height:1px;background:#c8c8c8"></div><div class="t d" style="left:31px;top:588px;transform:scaleX(0.9846);transform-origin:0 0;">ca49768b-4ba1-4a8b-970e-d5b153...</div><div class="t d" style="left:224px;top:588px;transform:scaleX(0.9500);transform-origin:0 0;">480400</div><div class="t d" style="left:417px;top:588px;">2013/07/11</div><div class="t d" style="left:610px;top:588px;transform:scaleX(0.9500);transform-origin:0 0;">541400</div><div class="t d" style="left:803px;top:588px;">2013/07/17</div><div class="t d" style="left:995px;top:588px;transform:scaleX(0.9541);transform-origin:0 0;">Stoping</div><div class="r" style="left:219px;top:583px;width:1px;height:22px;background:#c8c8c8"></div><div class="r" style="left:412px;top:583px;width:1px;height:22px;background:#c8c8c8"></div><div class="r" style="left:605px;top:583px;width:1px;height:22px;background:#c8c8c8"></div><div class="r" style="left:798px;top:583px;width:1px;height:22px;background:#c8c8c8"></div><div class="r" style="left:991px;top:583px;width:1px;height:22px;background:#c8c8c8"></div><div class="r" style="left:1184px;top:583px;width:1px;height:22px;background:#c8c8c8"></div><div class="r" style="left:27px;top:606px;width:1357px;height:22px;background:#f0f0f0"></div><div class="r" style="left:27px;top:628px;width:1357px;height:1px;background:#c8c8c8"></div><div class="t d" style="left:31px;top:611px;transform:scaleX(0.9880);transform-origin:0 0;">ca49fe91-34a8-4ec7-818b-eed81bd...</div><div class="t d" style="left:224px;top:611px;transform:scaleX(0.9500);transform-origin:0 0;">66400</div><div class="t d" style="left:417px;top:611px;">2002/08/21</div><div class="t d" style="left:610px;top:611px;transform:scaleX(0.9500);transform-origin:0 0;">31400</div><div class="t d" style="left:803px;top:611px;">2002/09/04</div><div class="t d" style="left:995px;top:611px;transform:scaleX(0.9541);transform-origin:0 0;">Stoping</div><div class="r" style="left:219px;top:606px;width:1px;height:22px;background:#c8c8c8"></div><div class="r" style="left:412px;top:606px;width:1px;height:22px;background:#c8c8c8"></div><div class="r" style="left:605px;top:606px;width:1px;height:22px;background:#c8c8c8"></div><div class="r" style="left:798px;top:606px;width:1px;height:22px;background:#c8c8c8"></div><div class="r" style="left:991px;top:606px;width:1px;height:22px;background:#c8c8c8"></div><div class="r" style="left:1184px;top:606px;width:1px;height:22px;background:#c8c8c8"></div><div class="r" style="left:27px;top:629px;width:1357px;height:22px;background:#f0f0f0"></div><div class="r" style="left:27px;top:651px;width:1357px;height:1px;background:#c8c8c8"></div><div class="t d" style="left:31px;top:634px;transform:scaleX(0.9880);transform-origin:0 0;">ca4b92d4-3b50-4ea6-9b7e-b8c1f48...</div><div class="t d" style="left:224px;top:634px;transform:scaleX(0.9500);transform-origin:0 0;">620400</div><div class="t d" style="left:417px;top:634px;">2016/10/21</div><div class="t d" style="left:610px;top:634px;transform:scaleX(0.9500);transform-origin:0 0;">525400</div><div class="t d" style="left:803px;top:634px;">2016/10/27</div><div class="t d" style="left:995px;top:634px;transform:scaleX(0.9541);transform-origin:0 0;">Stoping</div><div class="r" style="left:219px;top:629px;width:1px;height:22px;background:#c8c8c8"></div><div class="r" style="left:412px;top:629px;width:1px;height:22px;background:#c8c8c8"></div><div class="r" style="left:605px;top:629px;width:1px;height:22px;background:#c8c8c8"></div><div class="r" style="left:798px;top:629px;width:1px;height:22px;background:#c8c8c8"></div><div class="r" style="left:991px;top:629px;width:1px;height:22px;background:#c8c8c8"></div><div class="r" style="left:1184px;top:629px;width:1px;height:22px;background:#c8c8c8"></div><div class="r" style="left:27px;top:652px;width:1357px;height:22px;background:#f0f0f0"></div><div class="r" style="left:27px;top:674px;width:1357px;height:1px;background:#c8c8c8"></div><div class="t d" style="left:31px;top:657px;transform:scaleX(0.9945);transform-origin:0 0;">ca4bd893-1a22-4fd9-b5e4-50ad3f2...</div><div class="t d" style="left:224px;top:657px;transform:scaleX(0.9500);transform-origin:0 0;">48410</div><div class="t d" style="left:417px;top:657px;">2003/02/24</div><div class="t d" style="left:610px;top:657px;transform:scaleX(0.9500);transform-origin:0 0;">29410</div><div class="t d" style="left:803px;top:657px;">2003/03/03</div><div class="t d" style="left:995px;top:657px;transform:scaleX(0.9541);transform-origin:0 0;">Stoping</div><div class="r" style="left:219px;top:652px;width:1px;height:22px;background:#c8c8c8"></div><div class="r" style="left:412px;top:652px;width:1px;height:22px;background:#c8c8c8"></div><div class="r" style="left:605px;top:652px;width:1px;height:22px;background:#c8c8c8"></div><div class="r" style="left:798px;top:652px;width:1px;height:22px;background:#c8c8c8"></div><div class="r" style="left:991px;top:652px;width:1px;height:22px;background:#c8c8c8"></div><div class="r" style="left:1184px;top:652px;width:1px;height:22px;background:#c8c8c8"></div><div class="r" style="left:27px;top:675px;width:1357px;height:22px;background:#f0f0f0"></div><div class="r" style="left:27px;top:697px;width:1357px;height:1px;background:#c8c8c8"></div><div class="t d" style="left:31px;top:680px;transform:scaleX(0.9950);transform-origin:0 0;">ca4e571d-08f8-413d-8bfc-3e4489e...</div><div class="t d" style="left:224px;top:680px;transform:scaleX(0.9500);transform-origin:0 0;">23400</div><div class="t d" style="left:417px;top:680px;">2006/03/06</div><div class="t d" style="left:610px;top:680px;transform:scaleX(0.9500);transform-origin:0 0;">31400</div><div class="t d" style="left:803px;top:680px;">2006/03/10</div><div class="t d" style="left:995px;top:680px;transform:scaleX(0.9541);transform-origin:0 0;">Stoping</div><div class="r" style="left:219px;top:675px;width:1px;height:22px;background:#c8c8c8"></div><div class="r" style="left:412px;top:675px;width:1px;height:22px;background:#c8c8c8"></div><div class="r" style="left:605px;top:675px;width:1px;height:22px;background:#c8c8c8"></div><div class="r" style="left:798px;top:675px;width:1px;height:22px;background:#c8c8c8"></div><div class="r" style="left:991px;top:675px;width:1px;height:22px;background:#c8c8c8"></div><div class="r" style="left:1184px;top:675px;width:1px;height:22px;background:#c8c8c8"></div><div class="r" style="left:27px;top:698px;width:1357px;height:20px;background:#f0f0f0"></div><div class="r" style="left:27px;top:718px;width:1357px;height:1px;background:#c8c8c8"></div><div class="t d" style="left:31px;top:703px;">ca4ef043-9a7e-4e99-ab34-d96655f...</div><div class="t d" style="left:224px;top:703px;transform:scaleX(0.9500);transform-origin:0 0;">482400</div><div class="t d" style="left:417px;top:703px;">2011/11/04</div><div class="t d" style="left:610px;top:703px;transform:scaleX(0.9500);transform-origin:0 0;">514400</div><div class="t d" style="left:803px;top:703px;">2011/11/11</div><div class="t d" style="left:995px;top:703px;transform:scaleX(0.9541);transform-origin:0 0;">Stoping</div><div class="r" style="left:219px;top:698px;width:1px;height:20px;background:#c8c8c8"></div><div class="r" style="left:412px;top:698px;width:1px;height:20px;background:#c8c8c8"></div><div class="r" style="left:605px;top:698px;width:1px;height:20px;background:#c8c8c8"></div><div class="r" style="left:798px;top:698px;width:1px;height:20px;background:#c8c8c8"></div><div class="r" style="left:991px;top:698px;width:1px;height:20px;background:#c8c8c8"></div><div class="r" style="left:1184px;top:698px;width:1px;height:20px;background:#c8c8c8"></div><div class="r" style="left:220px;top:307px;width:192px;height:22px;background:#fff;border:1px dotted #333;box-sizing:border-box"></div><div class="t d" style="left:224px;top:312px;transform:scaleX(0.9500);transform-origin:0 0;">541400</div><svg class="r" style="left:13px;top:314px" width="5" height="9" viewBox="0 0 5 9"><path d="M0 0l5 4.5L0 9z" fill="#666"/></svg><div class="r" style="left:1385px;top:238px;width:15px;height:16px;background:#fff;border:1px solid #999;box-sizing:border-box"></div><svg class="r" style="left:1389px;top:244px" width="7" height="4" viewBox="0 0 7 4"><path d="M0 4h7L3.5 0z" fill="#6a6a6a"/></svg><div class="r" style="left:1385px;top:594px;width:15px;height:17px;background:#fff;border:1px solid #999;box-sizing:border-box"></div><div class="r" style="left:1385px;top:701px;width:15px;height:16px;background:#fff;border:1px solid #999;box-sizing:border-box"></div><svg class="r" style="left:1389px;top:708px" width="7" height="4" viewBox="0 0 7 4"><path d="M0 0h7L3.5 4z" fill="#6a6a6a"/></svg><div class="r" style="left:1384px;top:718px;width:17px;height:1px;background:#c8c8c8"></div><div class="r" style="left:1402px;top:181px;width:1px;height:576px;background:#d4d4d4"></div><div class="r" style="left:2px;top:181px;width:1px;height:576px;background:#cfcfcf"></div><div class="r" style="left:1px;top:154px;width:1px;height:604px;background:#f8f8f8"></div><div class="r" style="left:4px;top:756px;width:1399px;height:1px;background:#d4d4d4"></div><div class="r" style="left:0px;top:759px;width:1427px;height:1px;background:#c8c8c8"></div><div class="r" style="left:0px;top:760px;width:1427px;height:22px;background:#dcdcdc"></div><div class="r" style="left:1419px;top:768px;width:2px;height:2px;background:#a4a4a4"></div><div class="r" style="left:1415px;top:772px;width:2px;height:2px;background:#a4a4a4"></div><div class="r" style="left:1419px;top:772px;width:2px;height:2px;background:#a4a4a4"></div><div class="r" style="left:1411px;top:776px;width:2px;height:2px;background:#a4a4a4"></div><div class="r" style="left:1415px;top:776px;width:2px;height:2px;background:#a4a4a4"></div><div class="r" style="left:1419px;top:776px;width:2px;height:2px;background:#a4a4a4"></div><div class="r" style="left:192px;top:320px;width:4px;height:160px;background:linear-gradient(to right,rgba(0,0,0,0.42),rgba(0,0,0,0.12) 60%,rgba(0,0,0,0))"></div><div class="r" style="left:27px;top:478px;width:165px;height:2px;background:linear-gradient(to bottom,rgba(0,0,0,0.18),rgba(0,0,0,0))"></div><div class="r" style="left:23px;top:316px;width:169px;height:162px;background:#fcfcfc;border:1px solid #858585;box-sizing:border-box"></div><div class="r" style="left:24px;top:317px;width:40px;height:160px;background:linear-gradient(to right,#f4f4f4,#f0f0f0 80%,#e9e9e9)"></div><div class="r" style="left:25px;top:318px;width:165px;height:38px;background:#b6d6f2;border:1px solid #0a78d8;box-sizing:border-box"></div><div class="t m" style="left:75px;top:331px;transform:scaleX(1.0483);transform-origin:0 0;">View</div><div class="t m" style="left:75px;top:369px;transform:scaleX(1.0524);transform-origin:0 0;">Print Preview...</div><div class="t m" style="left:75px;top:407px;transform:scaleX(1.0870);transform-origin:0 0;">Zoom To</div><div class="r" style="left:72px;top:435px;width:118px;height:1px;background:#bdbdbd"></div><div class="t m" style="left:75px;top:451px;transform:scaleX(1.0315);transform-origin:0 0;">Delete</div><svg class="r" style="left:28px;top:320px" width="32" height="34" viewBox="0 0 32 34"><path d="M1 3.5h5l1.5-1.5h3l1 1.5H13.5v10H1z" fill="#b08c08" opacity="0.95"/><path d="M1.5 2.5h5" stroke="#d8c060" stroke-width="1" opacity="0.6"/><path d="M12 9.5h14l3.5 3.5v19H12z" fill="#b8cce0" stroke="#3c4858" stroke-width="2"/><path d="M26 9.5v3.5h3.5" fill="none" stroke="#3c4858" stroke-width="1.3"/><rect x="15" y="19" width="11" height="3" fill="#6a7886"/><rect x="15" y="24" width="11" height="2" fill="#8e9aa6"/></svg><svg class="r" style="left:28px;top:358px" width="32" height="33" viewBox="0 0 32 33"><rect x="1" y="1" width="18" height="22" fill="#b4d4f0" stroke="#98a8d8" stroke-width="1.5"/><rect x="1" y="1" width="3.5" height="22" fill="#e8eef8" stroke="#98a8d8"/><rect x="15.5" y="1" width="3.5" height="22" fill="#e8eef8" stroke="#98a8d8"/><path d="M1.5 5.5h3M1.5 19h3M15.5 5.5h3M15.5 19h3" stroke="#98a8d8"/><rect x="15" y="9" width="10" height="10" fill="#f4f6fa" stroke="#8090c0"/><path d="M8.5 20.5c0-3 1.5-4 3.5-4h12c2 0 3.5 1 3.5 4v10h-19z" fill="#e4eaf6" stroke="#6878b0" stroke-width="1.4"/><rect x="10" y="17" width="16" height="4" fill="#4a5a8c"/><rect x="12.5" y="25.5" width="11" height="6" fill="#fff" stroke="#8090c0"/><rect x="16" y="25.5" width="4" height="1.5" fill="#5aa8e8"/></svg><svg class="r" style="left:27px;top:396px" width="34" height="34" viewBox="0 0 34 34"><defs><radialGradient id="lg" cx="40%" cy="35%" r="65%"><stop offset="0" stop-color="#e4f0fc"/><stop offset="0.5" stop-color="#a8cef2"/><stop offset="1" stop-color="#5a92dc"/></radialGradient></defs><path d="M23 23L30.5 30.5" stroke="#b87838" stroke-width="5" stroke-linecap="round"/><path d="M23 23L30.5 30.5" stroke="#f2c070" stroke-width="2.6" stroke-linecap="round"/><circle cx="14" cy="13.5" r="12" fill="#eef2fa" stroke="#7888c0" stroke-width="1.3"/><circle cx="14" cy="13.5" r="9.2" fill="url(#lg)" stroke="#4a68b0" stroke-width="1.3"/></svg><svg class="r" style="left:31px;top:444px" width="25" height="25" viewBox="0 0 25 25"><defs><radialGradient id="xg" cx="50%" cy="50%" r="60%"><stop offset="0" stop-color="#f8b8a0"/><stop offset="0.6" stop-color="#e86a58"/><stop offset="1" stop-color="#d04838"/></radialGradient></defs><path d="M1 5l4-4 7.5 7.5L20 1l4 4-7.5 7.5L24 20l-4 4-7.5-7.5L5 24l-4-4 7.5-7.5z" fill="url(#xg)" stroke="#b83a30" stroke-width="1" stroke-linejoin="round"/></svg><svg class="r" style="left:124px;top:337px" width="12" height="19" viewBox="0 0 12 19"><path d="M0.5 0.5v15l3.5-3.5 2.5 6 2-1-2.5-5.8h5z" fill="#fff" stroke="#000" stroke-width="1"/></svg><div class="r" style="left:0px;top:0px;width:1427px;height:1px;background:#000"></div><div class="r" style="left:0px;top:0px;width:1px;height:782px;background:#000"></div><div class="r" style="left:1426px;top:0px;width:1px;height:782px;background:#000"></div><div class="r" style="left:0px;top:781px;width:1427px;height:1px;background:#000"></div>
</body></html>
